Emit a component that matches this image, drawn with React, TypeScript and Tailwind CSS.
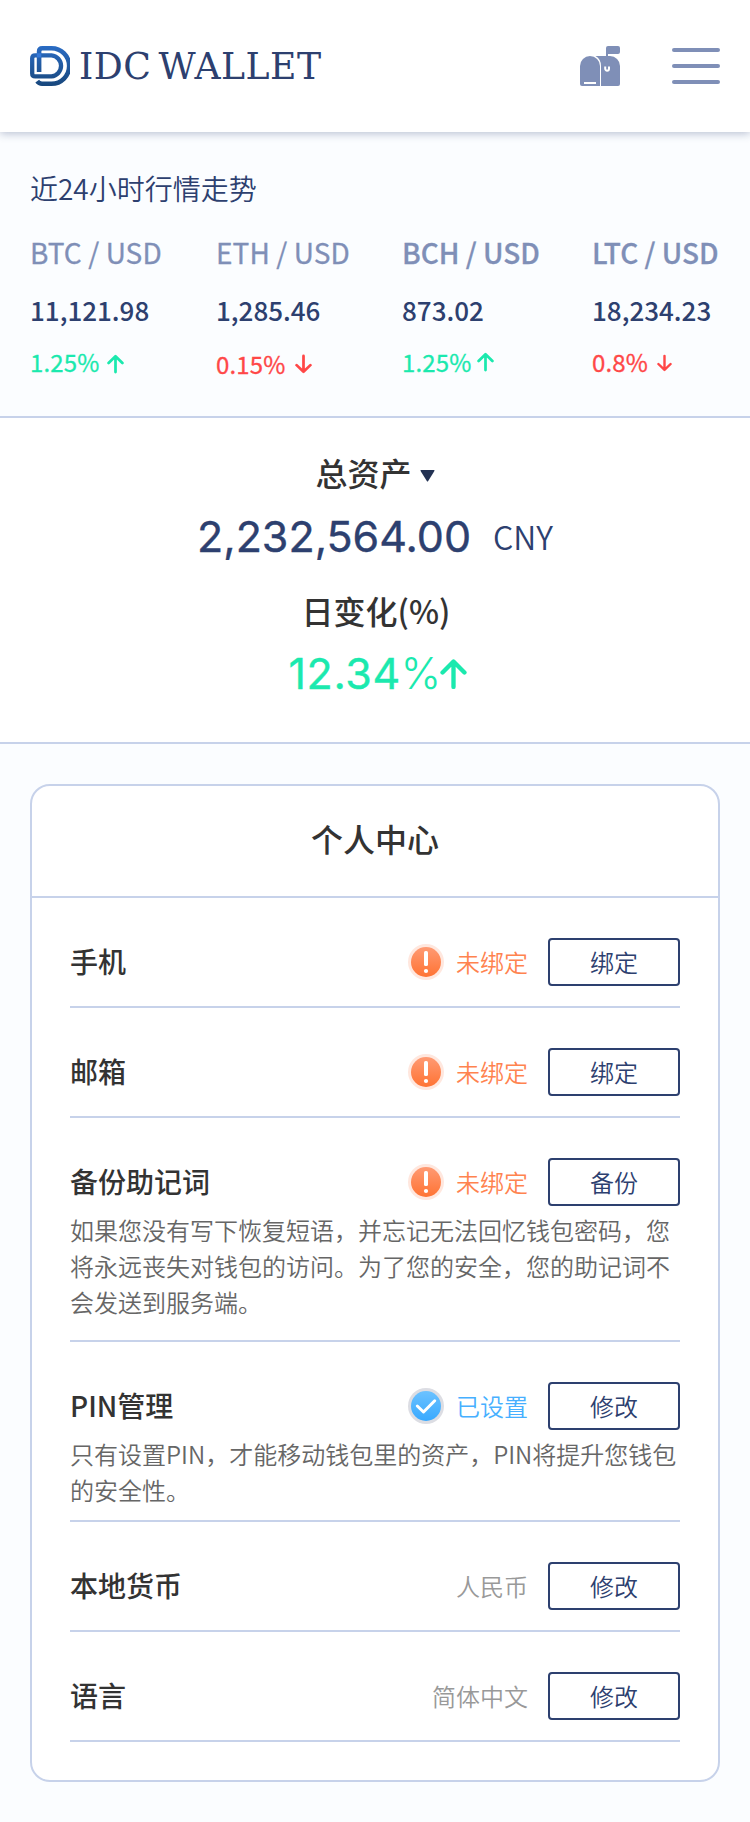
import React from "react";

type Trend = "up" | "down";

const tickers: {
  pair: string;
  price: string;
  change: string;
  trend: Trend;
  column: string;
  pairWeight: string;
  changeClass: string;
  arrowClass: string;
}[] = [
  { pair: "BTC / USD", price: "11,121.98", change: "1.25%", trend: "up", column: "w-[186px]", pairWeight: "tracking-[0.1px] [-webkit-text-stroke:0.3px_currentColor]", changeClass: "gap-[7px]", arrowClass: "h-5 w-[17px] mt-[3px]" },
  { pair: "ETH / USD", price: "1,285.46", change: "0.15%", trend: "down", column: "w-[186px]", pairWeight: "tracking-[0.1px] [-webkit-text-stroke:0.3px_currentColor]", changeClass: "gap-[9px] pt-[2px]", arrowClass: "h-5 w-[17px]" },
  { pair: "BCH / USD", price: "873.02", change: "1.25%", trend: "up", column: "w-[190px]", pairWeight: "font-medium [-webkit-text-stroke:0.3px_currentColor]", changeClass: "gap-[5px]", arrowClass: "h-5 w-[17px] mb-px" },
  { pair: "LTC / USD", price: "18,234.23", change: "0.8%", trend: "down", column: "w-[150px]", pairWeight: "font-medium [-webkit-text-stroke:0.3px_currentColor]", changeClass: "gap-[9px]", arrowClass: "h-[18px] w-[15px] mt-[2px]" },
];

type Status = "warn" | "ok" | "plain";

const rows: {
  name: string;
  status: Status;
  label: string;
  action: string;
  note?: string;
  padding: string;
}[] = [
  { name: "手机", status: "warn", label: "未绑定", action: "绑定", padding: "pb-5" },
  { name: "邮箱", status: "warn", label: "未绑定", action: "绑定", padding: "pb-5" },
  {
    name: "备份助记词",
    status: "warn",
    label: "未绑定",
    action: "备份",
    note: "如果您没有写下恢复短语，并忘记无法回忆钱包密码，您将永远丧失对钱包的访问。为了您的安全，您的助记词不会发送到服务端。",
    padding: "pb-5",
  },
  {
    name: "PIN管理",
    status: "ok",
    label: "已设置",
    action: "修改",
    note: "只有设置PIN，才能移动钱包里的资产，PIN将提升您钱包的安全性。",
    padding: "pb-3",
  },
  { name: "本地货币", status: "plain", label: "人民币", action: "修改", padding: "pb-5" },
  { name: "语言", status: "plain", label: "简体中文", action: "修改", padding: "pb-5" },
];

const statusColor: Record<Status, string> = {
  warn: "text-[#ff834f]",
  ok: "text-[#47b0ff]",
  plain: "text-[#999999]",
};

function Logo() {
  return (
    <svg width="40" height="40" viewBox="0 0 40 40" fill="none" className="shrink-0">
      <defs>
        <linearGradient id="logo" x1="0" y1="0" x2="0" y2="40" gradientUnits="userSpaceOnUse">
          <stop offset="0" stopColor="#2a6cc4" />
          <stop offset="1" stopColor="#18477c" />
        </linearGradient>
      </defs>
      <path d="M9.1 26V5.5Q9.1 2.3 12.3 2.3H21.5A17.7 17.7 0 0 1 21.5 37.7H12Q9 37.7 7.2 35.2" stroke="url(#logo)" strokeWidth="4.6" />
      <path d="M5.2 9.3H21.5A10.6 10.6 0 0 1 21.5 30.4H5.2Q2.2 30.4 2.2 27.4V12.3Q2.2 9.3 5.2 9.3Z" stroke="url(#logo)" strokeWidth="4.3" />
      <path d="M6.8 7.2h4.5v4.3H6.8z" fill="#3478d8" />
    </svg>
  );
}

function Mailbox() {
  return (
    <svg width="40" height="40" viewBox="0 0 40 40" fill="#7f8fb7">
      <path d="M0 20A10 10 0 0 1 20 20V40H2Q0 40 0 38Z" />
      <path d="M15.5 10H30A10 10 0 0 1 40 20V38Q40 40 38 40H21V20Q21 13 15.5 10Z" />
      <path d="M26 11V2Q26 0 28 0H38Q40 0 40 2V6Q40 8 38 8H28V11Z" />
      <rect x="4" y="36" width="12" height="2" fill="#fff" />
      <path d="M25.2 20.5V22.8A1.9 1.9 0 0 0 29 22.8V20.5" fill="none" stroke="#fff" strokeWidth="2" />
    </svg>
  );
}

function Arrow({ trend, className }: { trend: Trend; className: string }) {
  return (
    <svg viewBox="0 0 18 20" className={className} fill="none" stroke="currentColor" strokeWidth="2.9" strokeLinecap="round" strokeLinejoin="round">
      {trend === "up" ? <path d="M9 18.6V1.8M1.7 9L9 1.7L16.3 9" /> : <path d="M9 1.4V18.2M1.7 11.2L9 18.3L16.3 11.2" />}
    </svg>
  );
}

function StatusIcon({ status }: { status: Status }) {
  if (status === "plain") return null;
  const warn = status === "warn";
  return (
    <svg width="36" height="36" viewBox="0 0 36 36" className="mr-3">
      <defs>
        <linearGradient id="warn" x1="0" y1="0" x2="0" y2="1">
          <stop offset="0" stopColor="#ff9a73" />
          <stop offset="1" stopColor="#ff7333" />
        </linearGradient>
        <linearGradient id="ok" x1="0" y1="0" x2="0" y2="1">
          <stop offset="0" stopColor="#6cc2ff" />
          <stop offset="1" stopColor="#38a9ff" />
        </linearGradient>
      </defs>
      <circle cx="18" cy="18" r="18" fill={warn ? "#ffe7de" : "#dcdde3"} />
      <circle cx="18" cy="18" r="15" fill={warn ? "url(#warn)" : "url(#ok)"} />
      {warn ? (
        <g fill="#fff">
          <rect x="16" y="7" width="4" height="15" rx="1.6" />
          <circle cx="18" cy="27" r="2.1" />
        </g>
      ) : (
        <path d="M9.3 18L15.5 24L26.7 12.8" fill="none" stroke="#fff" strokeWidth="3" strokeLinecap="round" strokeLinejoin="round" />
      )}
    </svg>
  );
}

export default function App() {
  return (
    <div className="h-[1822px] w-[750px] bg-[#fbfdff] font-['Noto_Sans_CJK_SC',sans-serif] text-[#333333]">
      <header className="relative flex h-[132px] items-center bg-white pr-[30px] pl-[30px] shadow-[0_2px_8px_rgba(45,64,111,0.3)]">
        <Logo />
        <span className="mt-[2px] ml-[9px] h-[44px] w-[244px] origin-left scale-x-[0.978] font-['DejaVu_Serif',serif] text-[37px] leading-[44px] tracking-[0.5px] [word-spacing:-5px] whitespace-nowrap text-[#2d406f]">
          IDC WALLET
        </span>
        <div className="ml-auto flex items-center gap-[52px]">
          <Mailbox />
          <div className="flex w-12 flex-col gap-3">
            <i className="h-1 rounded-full bg-[#7f8fb7]" />
            <i className="h-1 rounded-full bg-[#7f8fb7]" />
            <i className="h-1 rounded-full bg-[#7f8fb7]" />
          </div>
        </div>
      </header>

      <section className="h-[286px] border-b-2 border-[#c7d2ea] pt-9 pl-[30px]">
        <h2 className="text-[28px] leading-10 font-[350] text-[#2d406f]">近24小时行情走势</h2>
        <div className="mt-6 flex">
          {tickers.map((t) => (
            <div key={t.pair} className={`shrink-0 whitespace-nowrap ${t.column}`}>
              <div className={`text-[28px] leading-10 text-[#7f8fb7] ${t.pairWeight}`}>{t.pair}</div>
              <div className="mt-[18px] text-[26px] leading-10 font-medium text-[#2d406f]">{t.price}</div>
              <div
                className={`mt-[12px] flex items-center text-2xl leading-10 ${t.changeClass} ${t.trend === "up" ? "text-[#1be9ae]" : "text-[#ff4747]"}`}
              >
                <span className="tracking-[0.15px] [-webkit-text-stroke:0.3px_currentColor]">{t.change}</span>
                <Arrow trend={t.trend} className={t.arrowClass} />
              </div>
            </div>
          ))}
        </div>
      </section>

      <section className="flex h-[326px] flex-col items-center border-b-2 border-[#c7d2ea] bg-white pt-[31px]">
        <div className="flex items-center gap-2 leading-[46px]">
          <span className="text-[32px] font-medium">总资产</span>
          <svg width="15" height="12" viewBox="0 0 15 12" fill="#233253" className="mt-[7px]">
            <path d="M1.2 0H13.8Q15 0 14.4 1L8.2 11Q7.5 12 6.8 11L.6 1Q0 0 1.2 0Z" />
          </svg>
        </div>
        <div className="mt-[17px] flex h-12 items-center text-[#2d406f]">
          <span className="mr-6 w-[271px] font-['Inter',sans-serif] text-[43px] leading-[48px] whitespace-nowrap [-webkit-text-stroke:0.4px_currentColor]">
            2,232,564.00
          </span>
          <span className="pl-px text-[32px] leading-[48px] font-[350]">CNY</span>
        </div>
        <div className="mt-[27px] pl-[2px] text-[32px] leading-[46px] font-medium">日变化(%)</div>
        <div className="mt-4 flex h-12 items-center pl-[5px] text-[#1be9ae]">
          <span className="w-[151px] font-['Inter',sans-serif] text-[43px] leading-[48px] whitespace-nowrap">
            <span className="tracking-[0.6px] [-webkit-text-stroke:0.4px_currentColor]">12.34</span>
            <span className="font-light">%</span>
          </span>
          <Arrow trend="up" className="mt-px h-8 w-[27px]" />
        </div>
      </section>

      <main className="mx-[30px] mt-10 h-[998px] rounded-[20px] border-2 border-[#c7d2ea] bg-white">
        <h1 className="h-[112px] border-b-2 border-[#c7d2ea] text-center text-[32px] leading-[105px] font-medium">个人中心</h1>
        <div className="px-[38px]">
          {rows.map((r) => (
            <div key={r.name} className={`border-b-2 border-[#c7d2ea] pt-10 ${r.padding}`}>
              <div className="flex h-12 items-center">
                <span className="mr-auto pb-[2px] text-[28px] leading-[44px] font-medium">{r.name}</span>
                <StatusIcon status={r.status} />
                <span className={`mr-5 text-2xl font-[350] ${statusColor[r.status]}`}>{r.label}</span>
                <button className="h-12 w-[132px] rounded-[4px] border-2 border-[#2d406f] text-2xl leading-[44px] font-[350] text-[#2d406f]">
                  {r.action}
                </button>
              </div>
              {r.note && <p className="mt-1.5 text-2xl leading-9 font-[350] text-[#666666]">{r.note}</p>}
            </div>
          ))}
        </div>
      </main>
    </div>
  );
}
